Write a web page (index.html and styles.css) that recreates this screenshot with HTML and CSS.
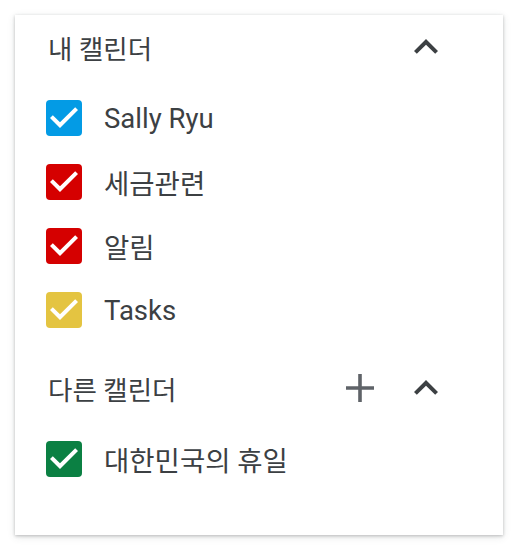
FILE: index.html
```html
<!DOCTYPE html>
<html lang="ko">
<head>
  <meta charset="utf-8">
  <title>캘린더 목록</title>
  <link rel="stylesheet" href="styles.css">
</head>
<body>
  <div class="card">
    <div class="section-header">
      <span class="section-title">내 캘린더</span>
      <div class="header-actions">
        <svg class="icon chevron" viewBox="0 0 24 24"><path d="M12 8l-6 6 1.41 1.41L12 10.83l4.59 4.58L18 14z"/></svg>
      </div>
    </div>
    <ul class="calendar-list">
      <li class="calendar-item">
        <svg class="checkbox" viewBox="0 0 24 24"><rect x="3" y="3" width="18" height="18" rx="2" fill="#039be5"/><path fill="#fff" d="M10 17l-5-5 1.41-1.41L10 14.17l7.59-7.59L19 8l-9 9z"/></svg>
        <span class="calendar-name">Sally Ryu</span>
      </li>
      <li class="calendar-item">
        <svg class="checkbox" viewBox="0 0 24 24"><rect x="3" y="3" width="18" height="18" rx="2" fill="#d50000"/><path fill="#fff" d="M10 17l-5-5 1.41-1.41L10 14.17l7.59-7.59L19 8l-9 9z"/></svg>
        <span class="calendar-name">세금관련</span>
      </li>
      <li class="calendar-item">
        <svg class="checkbox" viewBox="0 0 24 24"><rect x="3" y="3" width="18" height="18" rx="2" fill="#d50000"/><path fill="#fff" d="M10 17l-5-5 1.41-1.41L10 14.17l7.59-7.59L19 8l-9 9z"/></svg>
        <span class="calendar-name">알림</span>
      </li>
      <li class="calendar-item">
        <svg class="checkbox" viewBox="0 0 24 24"><rect x="3" y="3" width="18" height="18" rx="2" fill="#e4c441"/><path fill="#fff" d="M10 17l-5-5 1.41-1.41L10 14.17l7.59-7.59L19 8l-9 9z"/></svg>
        <span class="calendar-name">Tasks</span>
      </li>
    </ul>

    <div class="section-header second">
      <span class="section-title">다른 캘린더</span>
      <div class="header-actions">
        <svg class="icon plus" viewBox="0 0 24 24"><path d="M19 12.9h-6.1V19h-1.8v-6.1H5v-1.8h6.1V5h1.8v6.1H19z"/></svg>
        <svg class="icon chevron" viewBox="0 0 24 24"><path d="M12 8l-6 6 1.41 1.41L12 10.83l4.59 4.58L18 14z"/></svg>
      </div>
    </div>
    <ul class="calendar-list">
      <li class="calendar-item">
        <svg class="checkbox" viewBox="0 0 24 24"><rect x="3" y="3" width="18" height="18" rx="2" fill="#0b8043"/><path fill="#fff" d="M10 17l-5-5 1.41-1.41L10 14.17l7.59-7.59L19 8l-9 9z"/></svg>
        <span class="calendar-name">대한민국의 휴일</span>
      </li>
    </ul>
  </div>
</body>
</html>
```

FILE: styles.css
```css
body {
  margin: 0;
  padding: 15px;
  background-color: #fff;
  font-family: Roboto, "Noto Sans CJK KR", sans-serif;
  color: #3c4043;
}

.card {
  width: 488px;
  height: 520px;
  box-sizing: border-box;
  background-color: #fff;
  box-shadow: 0 1px 3px rgba(60, 64, 67, 0.3), 0 2px 8px rgba(60, 64, 67, 0.12);
  padding: 8px 0 0 0;
}

.section-header {
  display: flex;
  align-items: center;
  justify-content: space-between;
  height: 48px;
  padding: 0 53px 0 33px;
}

.section-header.second {
  margin-top: 22px;
}

.section-title {
  font-size: 26.5px;
}

.header-actions {
  display: flex;
  gap: 18px;
}

.icon {
  width: 48px;
  height: 48px;
}

.chevron {
  fill: #3c4043;
}

.plus {
  fill: #5f6368;
}

.calendar-list {
  list-style: none;
  margin: 15px 0 0 0;
  padding: 0 0 0 25px;
}

.calendar-item {
  display: flex;
  align-items: center;
  height: 64px;
}

.checkbox {
  width: 48px;
  height: 48px;
  margin-right: 16px;
}

.calendar-name {
  font-size: 27.5px;
}
```
